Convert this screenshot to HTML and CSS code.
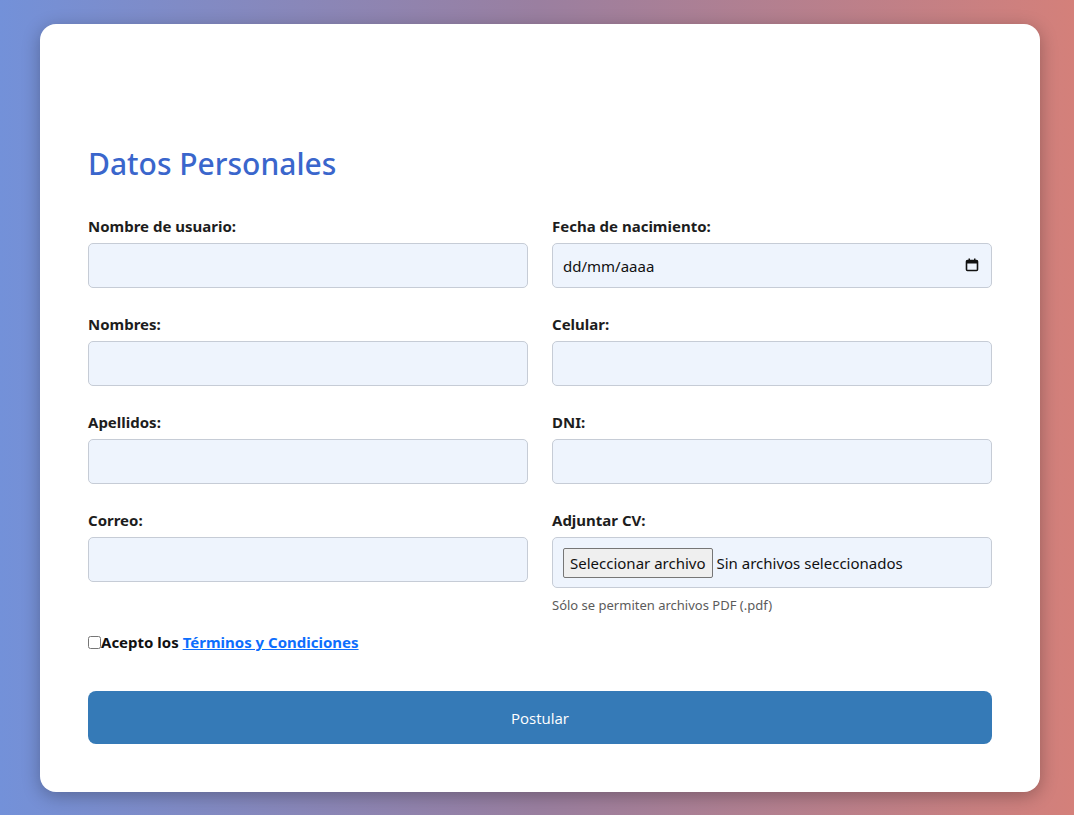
FILE: index.html
```html
<!DOCTYPE html>
<html lang="es">
<head>
<meta charset="utf-8">
<title>Datos Personales</title>
<link rel="stylesheet" href="styles.css">
</head>
<body>
<main class="card">
  <h1 class="title">Datos Personales</h1>
  <form class="form">
    <div class="grid">
      <div class="field">
        <label class="label">Nombre de usuario:</label>
        <input class="input" type="text">
      </div>
      <div class="field">
        <label class="label">Fecha de nacimiento:</label>
        <div class="date-wrap">
          <input class="input date" type="text" placeholder="dd/mm/aaaa">
          <svg class="cal" width="14" height="14" viewBox="0 0 14 14">
            <rect x="1.5" y="2.5" width="11" height="10" rx="1" fill="none" stroke="#111" stroke-width="1.6"/>
            <rect x="1.5" y="2.5" width="11" height="3" fill="#111"/>
            <rect x="3.5" y="0.5" width="1.5" height="3" fill="#111"/>
            <rect x="9" y="0.5" width="1.5" height="3" fill="#111"/>
          </svg>
        </div>
      </div>
      <div class="field">
        <label class="label">Nombres:</label>
        <input class="input" type="text">
      </div>
      <div class="field">
        <label class="label">Celular:</label>
        <input class="input" type="text">
      </div>
      <div class="field">
        <label class="label">Apellidos:</label>
        <input class="input" type="text">
      </div>
      <div class="field">
        <label class="label">DNI:</label>
        <input class="input" type="text">
      </div>
      <div class="field">
        <label class="label">Correo:</label>
        <input class="input" type="text">
      </div>
      <div class="field">
        <label class="label">Adjuntar CV:</label>
        <div class="file-box">
          <button type="button" class="file-btn">Seleccionar archivo</button>
          <span class="file-text">Sin archivos seleccionados</span>
        </div>
        <small class="hint">Sólo se permiten archivos PDF (.pdf)</small>
      </div>
    </div>
    <div class="terms">
      <input type="checkbox" class="check">
      <span>Acepto los <a href="#" class="link">Términos y Condiciones</a></span>
    </div>
    <button type="button" class="submit">Postular</button>
  </form>
</main>
</body>
</html>
```

FILE: styles.css
```css
* { box-sizing: border-box; }
html, body { margin: 0; height: 100%; }
body {
  background: linear-gradient(to right, #7391d9 0%, #9a7fa0 50%, #d4807a 100%);
  font-family: "Noto Sans", "Segoe UI", sans-serif;
  padding: 24px 34px 23px 40px;
}
.card {
  width: 1000px;
  height: 768px;
  background: #fff;
  border-radius: 16px;
  box-shadow: 0 4px 18px rgba(0,0,0,0.28);
  padding: 120px 48px 48px 48px;
}
.title {
  margin: 0 0 32px 0;
  font-size: 30px;
  font-weight: 500;
  color: #3a66cc;
  line-height: 40px;
}
.grid {
  display: grid;
  grid-template-columns: 440px 440px;
  column-gap: 24px;
  row-gap: 26px;
}
.field { display: flex; flex-direction: column; }
.label {
  font-weight: 700;
  font-size: 15px;
  color: #1d1d1d;
  line-height: 20px;
  margin-bottom: 7px;
}
.input {
  height: 45px;
  width: 100%;
  background: #eef4fd;
  border: 1px solid #c6ccd6;
  border-radius: 5px;
  font-family: inherit;
  font-size: 15px;
  padding: 0 10px;
}
.date-wrap { position: relative; }
.date::placeholder { color: #111; }
.cal { position: absolute; right: 13px; top: 15px; }
.file-box {
  height: 51px;
  background: #eef4fd;
  border: 1px solid #c6ccd6;
  border-radius: 5px;
  display: flex;
  align-items: center;
  padding: 0 10px;
  gap: 4px;
}
.file-btn {
  font-family: inherit;
  font-size: 15px;
  height: 30px;
  padding: 0 6px;
  background: #efefef;
  border: 1px solid #767676;
  border-radius: 2px;
  color: #111;
}
.file-text { font-size: 15px; color: #111; }
.hint {
  font-size: 13px;
  color: #5b5b5b;
  margin-top: 8px;
  line-height: 18px;
}
.terms {
  display: flex;
  align-items: center;
  font-weight: 700;
  font-size: 15px;
  color: #111;
  margin-top: 18px;
}
.check { margin: 0; width: 13px; height: 13px; }
.link { color: #0d6efd; }
.submit {
  display: block;
  width: 100%;
  height: 53px;
  margin-top: 39px;
  background: #357ab7;
  color: #fff;
  border: none;
  border-radius: 8px;
  font-family: "Open Sans", sans-serif;
  font-weight: 400;
  font-size: 15px;
}
```
